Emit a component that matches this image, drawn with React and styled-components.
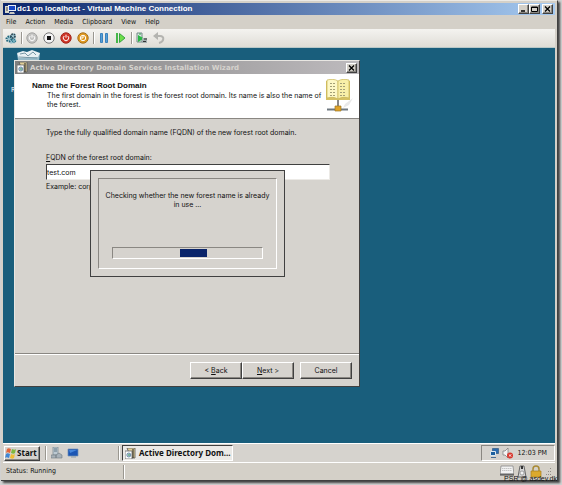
import React, { useState } from 'react'
import styled, { createGlobalStyle, css } from 'styled-components'

const Global = createGlobalStyle`
    * { box-sizing: border-box; }
    body {
        margin: 0;
        background: #fff;
        font-family: "DejaVu Sans Condensed", "Noto Sans", sans-serif;
        font-size: 7px;
        line-height: 9px;
        color: #111;
    }
    button, input { font: inherit; color: inherit; border-radius: 0; }
    button { padding: 0; white-space: nowrap; }
    svg { display: block; flex: none; }
`

const raised = css`
    border: 1px solid;
    border-color: #fff #404040 #404040 #fff;
    box-shadow: inset -1px -1px #8a8782;
`

const sunken = css`
    border: 1px solid;
    border-color: #8a8782 #fff #fff #8a8782;
`

const Screen = styled.div`
    display: flex;
    min-height: 100vh;
    padding: 0 4px 4px 1px;
    background: #d2d2d2;
`

const Frame = styled.main`
    display: flex;
    flex-direction: column;
    flex: 1;
    min-width: 0;
    padding: 2px 2px 0;
    background: #d4d0c8;
    border-top: 1px solid #eceae6;
    border-right: 1px solid #404040;
    border-bottom: 1px solid #404040;
    box-shadow: 2px 2px 2px #444;
`

const TitleBar = styled.header`
    display: flex;
    align-items: center;
    gap: 1px;
    height: 12px;
    padding: 0 2px;
    color: #fff;
    background: linear-gradient(90deg, #0a246a, #a6caf0);
`

const WindowTitle = styled.h1`
    flex: 1;
    margin: 0;
    font: bold 8px/10px "Liberation Sans", Arial, sans-serif;
`

const CaptionButtons = styled.div`
    display: flex;
    & > :last-child { margin-left: 2px; }
`

const CaptionButton = styled.button`
    display: grid;
    place-items: center;
    width: 11px;
    height: 10px;
    background: #d4d0c8;
    ${raised}
`

const MenuBar = styled.nav`
    display: flex;
    align-items: center;
    gap: 9px;
    height: 14px;
    padding: 0 3px;
    button { border: 0; background: none; }
`

const Toolbar = styled.div`
    display: flex;
    align-items: center;
    gap: 5px;
    height: 19px;
    padding: 0 2px;
    background: linear-gradient(#f4f3f0, #dfddd6);
    border-bottom: 1px solid #b8c8c8;
    & > span { margin: 0 -1px; }
`

const ToolButton = styled.button`
    border: 0;
    background: none;
`

const Divider = styled.span`
    width: 1px;
    height: ${p => p.$tall ? 14 : 12}px;
    background: #9a9790;
    box-shadow: 1px 0 #fff;
`

const Desktop = styled.section`
    position: relative;
    flex: 1;
    min-height: 395px;
    background: #195e7c;
    overflow: hidden;
`

const DesktopIcon = styled.div`
    position: absolute;
    top: 2px;
    left: 8px;
    display: flex;
    flex-direction: column;
    align-items: center;
    gap: 8px;
    color: #fff;
`

const Wizard = styled.section`
    position: absolute;
    top: 12px;
    left: 11px;
    width: 346px;
    background: #d6d3ce;
    font-family: Inter, "Liberation Sans", sans-serif;
    border: 1px solid;
    border-color: #e8e6e2 #404040 #404040 #e8e6e2;
`

const WizardTitle = styled.div`
    display: flex;
    align-items: center;
    gap: 2px;
    height: 13px;
    padding: 0 2px;
    color: #d6d3ce;
    background: linear-gradient(90deg, #808080, #bdbabd);
    h2 {
        flex: 1;
        margin: 0;
        font: bold 7px/10px "DejaVu Sans", "Noto Sans", sans-serif;
    }
`

const WizardHeader = styled.div`
    display: flex;
    justify-content: space-between;
    height: 45px;
    padding: 5px 6px 0 17px;
    background: #fff;
    border-bottom: 1px solid #8a8782;
    h3 { margin: 2px 0 0; font: bold 8px/10px "Liberation Sans", Arial, sans-serif; }
    p { margin: 0 0 0 15px; max-width: 278px; }
`

const WizardBody = styled.div`
    display: flex;
    flex-direction: column;
    align-items: stretch;
    min-height: 234px;
    padding: 9px 29px 0 31px;
    p { margin: 0 0 16px; }
`

const DomainInput = styled.input`
    width: 100%;
    height: 16px;
    margin: 2px 0;
    padding: 0;
    background: #fff;
    outline: 0;
    border: 1px solid;
    border-color: #404040 #eceae6 #eceae6 #404040;
`

const WizardFooter = styled.footer`
    display: flex;
    justify-content: flex-end;
    height: 33px;
    padding: 8px 7px 6px;
    border-top: 1px solid #8a8782;
    box-shadow: inset 0 1px #fff;
`

const PushButton = styled.button`
    width: 52px;
    height: 17px;
    margin-left: ${p => p.$apart ? 6 : 0}px;
    background: #d6d3ce;
    ${raised}
`

const Popup = styled.div`
    position: absolute;
    top: 109px;
    left: 75px;
    width: 195px;
    padding: 7px;
    background: #d6d3ce;
    border: 1px solid #404040;
`

const PopupGroup = styled.div`
    display: flex;
    flex-direction: column;
    justify-content: space-between;
    height: 91px;
    padding: 12px 13px 9px;
    text-align: center;
    ${sunken}
    p { margin: 0 -8px; }
`

const Track = styled.div`
    height: 12px;
    padding: 1px;
    ${sunken}
`

const Block = styled.div`
    width: 27px;
    height: 8px;
    background: #0a246a;
`

const Taskbar = styled.div`
    display: flex;
    align-items: center;
    gap: 5px;
    height: 20px;
    padding: 1px 0 1px 1px;
    background: #d6d3ce;
    border-top: 1px solid #fff;
    border-bottom: 1px solid #fff;
`

const StartButton = styled.button`
    display: flex;
    align-items: center;
    width: 36px;
    height: 15px;
    background: #d6d3ce;
    font: bold 8px/10px "Noto Sans", sans-serif;
    ${raised}
`

const QuickLaunch = styled.div`
    display: flex;
    gap: 4px;
    width: 62px;
`

const TaskButton = styled.button`
    display: flex;
    align-items: center;
    gap: 3px;
    width: 111px;
    height: 16px;
    margin-left: -2px;
    padding: 0 2px;
    background: #ebe9e6;
    font: bold 8px/10px "Noto Sans", sans-serif;
    border: 1px solid;
    border-color: #404040 #fff #fff #404040;
`

const Tray = styled.div`
    display: flex;
    align-items: center;
    gap: 2px;
    height: 16px;
    margin-left: auto;
    padding: 0 7px;
    ${sunken}
    time { margin-left: 3px; }
`

const StatusBar = styled.footer`
    position: relative;
    display: flex;
    align-items: center;
    height: 17px;
    padding: 0 2px 0 3px;
`

const StatusText = styled.span`
    width: 117px;
`

const StatusIcons = styled.div`
    display: flex;
    align-items: center;
    gap: 3px;
    margin-left: auto;
`

const Watermark = styled.span`
    position: absolute;
    right: -2px;
    bottom: -3px;
    font: 7px/9px "Liberation Sans", Arial, sans-serif;
`

const VmIcon = () => (
    <svg width="11" height="11" viewBox="0 0 11 11">
        <path d="M0 2h4v7H0z" fill="#d8d8c8" />
        <path d="M1 4h2M1 6h2" stroke="#445" />
        <path d="M3 1h8v6H3z" fill="#e9edf5" />
        <path d="M4 2h6v4H4z" fill="#1746c4" />
        <path d="M5 8h4l1 2H4z" fill="#c9c9c4" />
    </svg>
)

const GearIcon = () => (
    <svg width="12" height="12" viewBox="0 0 12 12">
        <path d="M1 6l4-3 4-2 2 2-1 7-4 2-2-2z" fill="#9cc3cf" />
        <circle cx="4" cy="7" r="2.5" fill="none" stroke="#20667c" strokeWidth="2" strokeDasharray="1.5 1" />
        <circle cx="8" cy="4" r="2" fill="none" stroke="#2c4450" strokeWidth="1.6" strokeDasharray="1.5 .8" />
        <circle cx="9" cy="9" r="1.5" fill="none" stroke="#2b7d92" strokeWidth="1.4" strokeDasharray="1 .6" />
    </svg>
)

const RoundIcon = ({ color, rim, kind }) => (
    <svg width="12" height="12" viewBox="0 0 12 12">
        <circle cx="6" cy="6" r="5.2" fill={color} stroke={rim} />
        {kind === 'stop' && <path d="M4 4h4v4H4z" fill="#111" />}
        {kind === 'power' && <g fill="none" stroke="#fff"><path d="M4.2 4a2.7 2.7 0 1 0 3.6 0" /><path d="M6 2.7v3" /></g>}
        {kind === 'save' && <g fill="none" stroke="#fff"><circle cx="6" cy="6" r="2.7" /><path d="M6 4v2H4" /></g>}
    </svg>
)

const PauseIcon = () => (
    <svg width="12" height="12" viewBox="0 0 12 12">
        <path d="M2.5 1.5h2v9h-2zM7.5 1.5h2v9h-2z" fill="#56a0d8" stroke="#3c82bd" />
    </svg>
)

const PlayIcon = () => (
    <svg width="12" height="12" viewBox="0 0 12 12">
        <path d="M2 1v10" stroke="#45b649" strokeWidth="2" />
        <path d="M4.5 1.5L10 6l-5.500 4.500z" fill="#6ede4a" stroke="#36a640" />
    </svg>
)

const SnapshotIcon = () => (
    <svg width="12" height="12" viewBox="0 0 12 12">
        <path d="M1 1h5v9H1z" fill="#dce8e4" stroke="#728a86" />
        <path d="M2 3l6 3.500-6 3.500z" fill="#29b745" />
        <path d="M6 6h5v5H6z" fill="#a5b0b0" />
        <path d="M8 7h3M7 9.500h3" stroke="#333" />
        <path d="M3 2h2" stroke="#39a853" />
    </svg>
)

const UndoIcon = () => (
    <svg width="12" height="12" viewBox="0 0 12 12">
        <path d="M2 4h5c5 0 4 6-1 7" fill="none" stroke="#b4b4b0" strokeWidth="2" />
        <path d="M5 0v8L0 4z" fill="#b4b4b0" />
    </svg>
)

const BinIcon = () => (
    <svg width="26" height="28" viewBox="0 0 26 28">
        <path d="M1 4l23-1-3 25H5z" fill="#b9d2dc" opacity=".8" />
        <path d="M1 3l6-2 4 1 5-2 8 3-2 4-19 1z" fill="#e9f1f4" />
        <path d="M4 4l5-1 3 3 5-4 3 3M3 7l18 1" fill="none" stroke="#7898a6" />
    </svg>
)

const WizardIcon = () => (
    <svg width="11" height="11" viewBox="0 0 11 11">
        <path d="M2 0h8v10H6z" fill="#e2cf98" stroke="#555" strokeWidth=".8" />
        <path d="M0 3h7v8H0z" fill="#fff" stroke="#666" strokeWidth=".8" />
        <circle cx="3.8" cy="7" r="2" fill="#c4d3df" stroke="#3c688c" strokeWidth=".7" />
        <circle cx="4" cy="7" r=".8" fill="#28924c" />
        <path d="M8 1v9" stroke="#1c1c1c" />
    </svg>
)

const BookIcon = () => (
    <svg width="28" height="34" viewBox="0 0 28 34">
        <path d="M20 25l8-6-4 7-6 3z" fill="#e9e9e9" />
        <path d="M1 2h11l1 1 1-1h11v19H14l-1 1-1-1H1z" fill="#d5c163" />
        <path d="M2 1c4-1 8-1 11 1v18c-3-2-7-2-11-1z" fill="#fdf8c6" stroke="#c7b457" strokeWidth=".7" />
        <path d="M24 1c-4-1-8-1-11 1v18c3-2 7-2 11-1z" fill="#f8efa8" stroke="#c7b457" strokeWidth=".7" />
        <path d="M5 4.500h6M5 7.500h6M5 10.500h6M5 13.500h6M5 16.500h6M15 4.500h6M15 7.500h6M15 10.500h6M15 13.500h6M15 16.500h6" stroke="#a3a078" strokeDasharray="2 1" />
        <path d="M13 21v7" stroke="#888" strokeWidth="2" />
        <path d="M2 30.500h21" stroke="#6e7880" strokeWidth="2" />
        <path d="M10 27h6v5h-6z" fill="#e0a328" stroke="#9c7524" strokeWidth=".7" />
    </svg>
)

const FlagIcon = () => (
    <svg width="12" height="12" viewBox="0 0 12 12">
        <path d="M2 2c1-1 2-1 4 0L5 6C3 5 2 5 1 6z" fill="#e2653a" />
        <path d="M7 2c2 1 3 1 4 0l-1 4c-1 1-2 1-4 0z" fill="#7fb83e" />
        <path d="M1 7c1-1 2-1 4 0l-1 4c-2-1-3-1-4 0z" fill="#3f86d4" />
        <path d="M6 7c2 1 3 1 4 0l-1 4c-1 1-2 1-4 0z" fill="#f0bd35" />
    </svg>
)

const ServerIcon = () => (
    <svg width="12" height="12" viewBox="0 0 12 12">
        <path d="M2 0h5v8H2z" fill="#bcc9d2" stroke="#77848e" strokeWidth=".7" />
        <path d="M3 2h3M3 4h3" stroke="#637884" />
        <path d="M5 8l3-2 3 2v3H5zM0 8h5v3H0z" fill="#a7b1b8" stroke="#6f7a82" strokeWidth=".6" />
    </svg>
)

const ShowDesktopIcon = () => (
    <svg width="12" height="12" viewBox="0 0 12 12">
        <path d="M1 2h10v7H1z" fill="#1c56b4" stroke="#718fb5" strokeWidth=".7" />
        <path d="M2 3h8L3 6z" fill="#4586db" />
        <path d="M4 10h5" stroke="#8a9cab" />
    </svg>
)

const NetworkIcon = () => (
    <svg width="11" height="12" viewBox="0 0 11 12">
        <path d="M3.500 1.500h6v5h-6z" fill="#2c6cae" stroke="#4a6f94" />
        <path d="M1.500 4.500h5v4h-5z" fill="#1e609f" stroke="#dde8f0" />
        <path d="M2 10.500h5" stroke="#4a6f94" />
    </svg>
)

const MutedIcon = () => (
    <svg width="11" height="12" viewBox="0 0 11 12">
        <path d="M1 4h2l3-3v10L3 8H1z" fill="#f4f4f4" stroke="#777" strokeWidth=".7" />
        <circle cx="8" cy="8.500" r="3" fill="#d8352b" />
        <path d="M6.800 7.300l2.400 2.400m0-2.400L6.800 9.700" stroke="#fff" strokeWidth=".9" />
    </svg>
)

const KeyboardIcon = () => (
    <svg width="14" height="13" viewBox="0 0 14 13">
        <path d="M1 1h12l1 9H0z" fill="#f2f2f2" stroke="#888" strokeWidth=".8" />
        <path d="M2 3.500h10M2 5.500h10" stroke="#c4c4c4" strokeDasharray="1.500 .5" />
        <path d="M0 9.500h14" stroke="#666" strokeWidth="2" />
    </svg>
)

const MouseIcon = () => (
    <svg width="10" height="13" viewBox="0 0 10 13">
        <path d="M3 1h4l2 11H1z" fill="#d5d5d5" stroke="#666" />
        <path d="M4 1h2v3H4z" fill="#333" />
        <circle cx="5" cy="8" r="2" fill="#f2f2f2" stroke="#777" strokeWidth=".6" />
    </svg>
)

const LockIcon = () => (
    <svg width="12" height="13" viewBox="0 0 12 13">
        <path d="M3 6V4a3 3 0 0 1 6 0v2" fill="none" stroke="#a88a34" strokeWidth="1.500" />
        <path d="M1 6h10v6H1z" fill="#dca92d" stroke="#a87f1d" strokeWidth=".7" />
    </svg>
)

const GripIcon = () => (
    <svg width="8" height="8" viewBox="0 0 8 8" fill="#8f8b84">
        <path d="M5 0h1v1H5zM3 3h1v1H3zM5 3h1v1H5zM1 6h1v1H1zM3 6h1v1H3zM5 6h1v1H5z" />
    </svg>
)

const Glyph = ({ kind }) => (
    <svg width="7" height="6" viewBox="0 0 7 6" fill="none" stroke="#000">
        {kind === 'min' && <path d="M1 5h4" strokeWidth="1.500" />}
        {kind === 'max' && <path d="M.5 1h6v4.500h-6zM.5 1.500h6" />}
        {kind === 'close' && <path d="M1 .5l5 5m0-5l-5 5" strokeWidth="1.300" />}
    </svg>
)

const menus = ['File', 'Action', 'Media', 'Clipboard', 'View', 'Help']

const tools = [
    { name: 'Ctrl+Alt+Delete', icon: <GearIcon /> },
    null,
    { name: 'Start', icon: <RoundIcon color="#c4c4c2" rim="#a4a4a2" kind="power" /> },
    { name: 'Turn off', icon: <RoundIcon color="#f4f4f4" rim="#777" kind="stop" /> },
    { name: 'Shut down', icon: <RoundIcon color="#cf3426" rim="#a3281e" kind="power" /> },
    { name: 'Save', icon: <RoundIcon color="#e09a22" rim="#a8701c" kind="save" /> },
    null,
    { name: 'Pause', icon: <PauseIcon /> },
    { name: 'Reset', icon: <PlayIcon /> },
    null,
    { name: 'Snapshot', icon: <SnapshotIcon /> },
    { name: 'Revert', icon: <UndoIcon /> },
]

const App = () => {
    const [domain, setDomain] = useState('test.com')
    const [offset] = useState(66)

    return (
        <>
            <Global />
            <Screen>
                <Frame>
                    <TitleBar>
                        <VmIcon />
                        <WindowTitle>dc1 on localhost - Virtual Machine Connection</WindowTitle>
                        <CaptionButtons>
                            <CaptionButton aria-label="Minimize"><Glyph kind="min" /></CaptionButton>
                            <CaptionButton aria-label="Maximize"><Glyph kind="max" /></CaptionButton>
                            <CaptionButton aria-label="Close"><Glyph kind="close" /></CaptionButton>
                        </CaptionButtons>
                    </TitleBar>
                    <MenuBar>
                        {menus.map(m => <button key={m}>{m}</button>)}
                    </MenuBar>
                    <Toolbar>
                        {tools.map((t, i) => t
                            ? <ToolButton key={i} aria-label={t.name}>{t.icon}</ToolButton>
                            : <Divider key={i} />)}
                    </Toolbar>

                    <Desktop>
                        <DesktopIcon>
                            <BinIcon />
                            <span>Recycle Bin</span>
                        </DesktopIcon>
                        <Wizard>
                            <WizardTitle>
                                <WizardIcon />
                                <h2>Active Directory Domain Services Installation Wizard</h2>
                                <CaptionButton aria-label="Close wizard"><Glyph kind="close" /></CaptionButton>
                            </WizardTitle>
                            <WizardHeader>
                                <div>
                                    <h3>Name the Forest Root Domain</h3>
                                    <p>The first domain in the forest is the forest root domain. Its name is also the name of the forest.</p>
                                </div>
                                <BookIcon />
                            </WizardHeader>
                            <WizardBody>
                                <p>Type the fully qualified domain name (FQDN) of the new forest root domain.</p>
                                <label htmlFor="fqdn"><u>F</u>QDN of the forest root domain:</label>
                                <DomainInput id="fqdn" value={domain} onChange={e => setDomain(e.target.value)} />
                                <span>Example: corp.contoso.com</span>
                            </WizardBody>
                            <WizardFooter>
                                <PushButton>&lt; <u>B</u>ack</PushButton>
                                <PushButton><u>N</u>ext &gt;</PushButton>
                                <PushButton $apart>Cancel</PushButton>
                            </WizardFooter>
                            <Popup role="dialog">
                                <PopupGroup>
                                    <p>Checking whether the new forest name is already in use ...</p>
                                    <Track role="progressbar" aria-label="Checking">
                                        <Block style={{ marginLeft: offset }} />
                                    </Track>
                                </PopupGroup>
                            </Popup>
                        </Wizard>
                    </Desktop>

                    <Taskbar>
                        <StartButton><FlagIcon />Start</StartButton>
                        <Divider $tall />
                        <QuickLaunch>
                            <ServerIcon />
                            <ShowDesktopIcon />
                        </QuickLaunch>
                        <Divider $tall />
                        <TaskButton><WizardIcon />Active Directory Dom...</TaskButton>
                        <Tray>
                            <NetworkIcon />
                            <MutedIcon />
                            <time>12:03 PM</time>
                        </Tray>
                    </Taskbar>
                    <StatusBar>
                        <StatusText>Status: Running</StatusText>
                        <Divider $tall />
                        <StatusIcons>
                            <KeyboardIcon />
                            <MouseIcon />
                            <LockIcon />
                            <GripIcon />
                        </StatusIcons>
                        <Watermark>PSR @ asdev.dk</Watermark>
                    </StatusBar>
                </Frame>
            </Screen>
        </>
    )
}

export default App
